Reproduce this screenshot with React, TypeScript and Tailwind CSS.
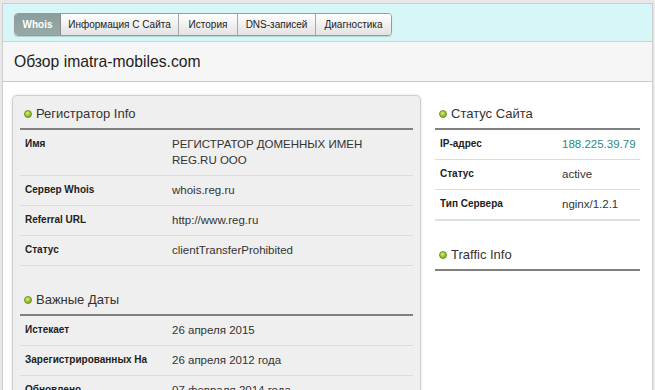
import React from "react";

const Dot = () => (
  <span className="inline-block w-[8px] h-[8px] rounded-full border border-[#6b8e1f] bg-[radial-gradient(circle_at_40%_35%,#d4f07a,#8fbf2a_60%,#6f9a1c)] mr-[4px] shrink-0" />
);

const Heading = ({ title, className = "" }: { title: string; className?: string }) => (
  <div className={"flex flex-col " + className}>
    <div className="flex items-center pl-[4px] h-[16px] text-[13px] text-[#333]">
      <Dot />
      <span>{title}</span>
    </div>
    <div className="mt-[6px] h-[2px] bg-[#808080]" />
  </div>
);

const Row = ({
  label,
  value,
  labelW,
  valueClass = "text-[#333]",
  last = false,
}: {
  label: string;
  value: React.ReactNode;
  labelW: string;
  valueClass?: string;
  last?: boolean;
}) => (
  <div
    className={
      "flex pt-[6px] pb-[7px] " +
      (last ? "border-b-2 border-[#e0e0e0]" : "border-b border-[#dcdcdc]")
    }
  >
    <div className={labelW + " pl-[5px] shrink-0 text-[10px] font-bold text-[#222] leading-[16px]"}>{label}</div>
    <div className={"text-[11.5px] leading-[16px] " + valueClass}>{value}</div>
  </div>
);

const tabs: [string, string][] = [
  ["Информация С Сайта", "w-[118px]"],
  ["История", "w-[59px]"],
  ["DNS-записей", "w-[78px]"],
  ["Диагностика", "w-[75px]"],
];

export default function App() {
  return (
    <div
      className="w-[655px] h-[390px] overflow-hidden bg-[#e8e8e8] pt-[3px] px-[2px]"
      style={{ fontFamily: '"Liberation Sans", Arial, sans-serif' }}
    >
      <div className="border border-[#cdcdcd] bg-white h-[400px] flex flex-col">
        <div className="h-[38px] bg-[#d6f6f7] border-b border-[#a6e4e7] pl-[11px] pt-[7px] shrink-0">
          <div className="inline-flex h-[23px] rounded-[4px] border border-[#9a9a9a] overflow-hidden shadow-[0_1px_1px_rgba(0,0,0,0.15)]">
            <div className="w-[46px] justify-center flex items-center bg-[linear-gradient(#8a9e9c,#98aaa8)] text-white font-bold text-[10px] border-r border-[#8a8a8a]">
              Whois
            </div>
            {tabs.map(([t, w], i) => (
              <div
                key={t}
                className={
                  "flex items-center justify-center bg-[linear-gradient(#ffffff,#e2e2e2)] text-[10px] text-[#222] " +
                  (i < tabs.length - 1 ? "border-r border-[#a8a8a8] " : "") +
                  w
                }
              >
                {t}
              </div>
            ))}
          </div>
        </div>
        <div className="h-[40px] bg-[#f6f6f6] border-b border-[#c9c9c9] flex items-center pl-[11px] text-[15.7px] text-[#222] shrink-0">
          Обзор imatra-mobiles.com
        </div>
        <div className="flex pl-[9px] pt-[13px]">
          <div className="w-[409px] h-[320px] bg-[#efefef] border border-[#cfcfcf] rounded-[5px] shadow-[0_0_3px_rgba(0,0,0,0.12)] px-[7px] pt-[10px] shrink-0">
            <Heading title="Регистратор Info" />
            <Row labelW="w-[152px]" label="Имя" value={<>РЕГИСТРАТОР ДОМЕННЫХ ИМЕН<br />REG.RU OOO</>} />
            <Row labelW="w-[152px]" label="Сервер Whois" value="whois.reg.ru" />
            <Row labelW="w-[152px]" label="Referral URL" value="http://www.reg.ru" />
            <Row labelW="w-[152px]" label="Статус" value="clientTransferProhibited" />
            <Heading title="Важные Даты" className="mt-[26px]" />
            <Row labelW="w-[152px]" label="Истекает" value="26 апреля 2015" />
            <Row labelW="w-[152px]" label="Зарегистрированных На" value="26 апреля 2012 года" />
            <Row labelW="w-[152px]" label="Обновлено" value="07 февраля 2014 года" />
          </div>
          <div className="w-[205px] ml-[14px] pt-[11px] shrink-0">
            <Heading title="Статус Сайта" />
            <Row labelW="w-[127px]" label="IP-адрес" value="188.225.39.79" valueClass="text-[#2a8a82]" />
            <Row labelW="w-[127px]" label="Статус" value="active" />
            <Row labelW="w-[127px]" label="Тип Сервера" value="nginx/1.2.1" last />
            <Heading title="Traffic Info" className="mt-[26px]" />
          </div>
        </div>
      </div>
    </div>
  );
}
